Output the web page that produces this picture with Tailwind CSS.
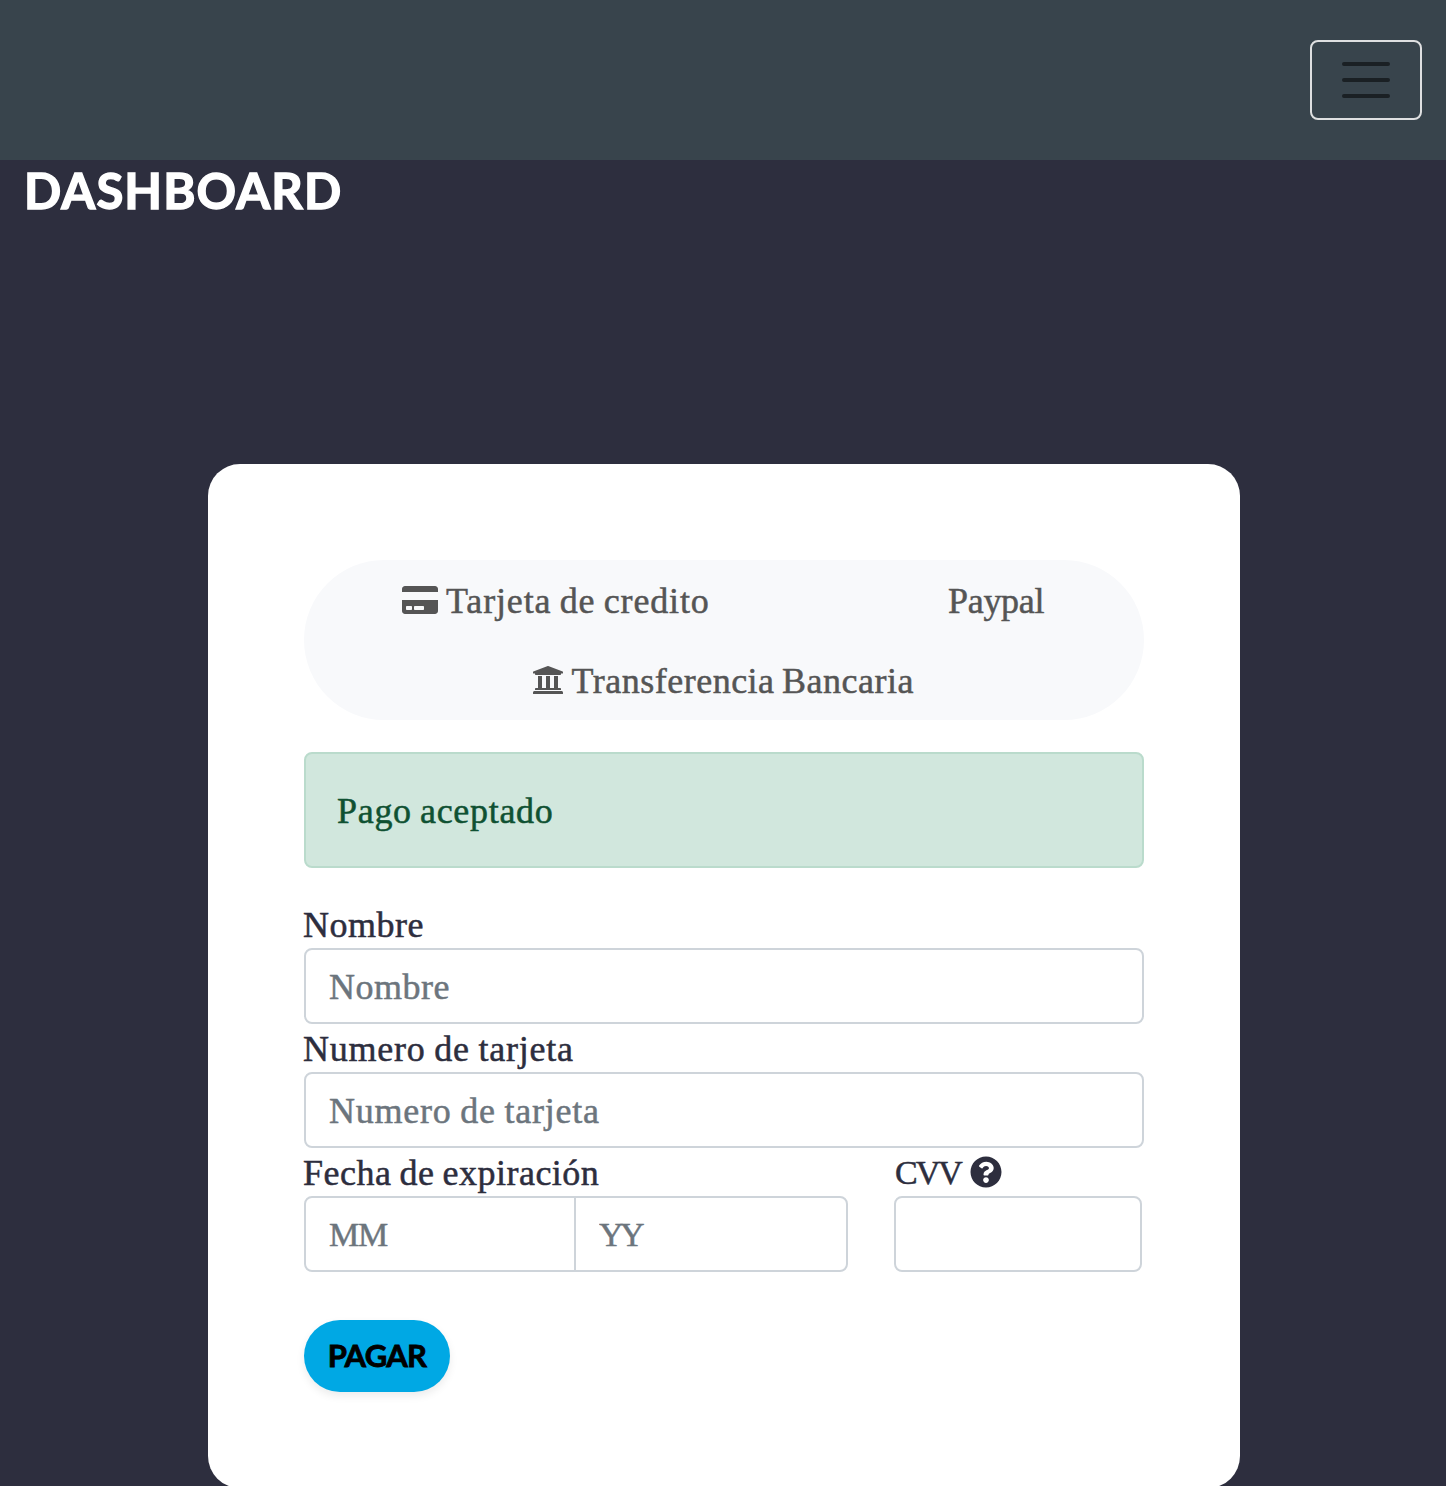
<!DOCTYPE html>
<html lang="es">
<head>
<meta charset="utf-8">
<title>Dashboard</title>
<script src="https://cdn.jsdelivr.net/npm/@tailwindcss/browser@4"></script>
</head>
<body class="h-[1486px] overflow-hidden bg-[#2d2e3e] font-['Liberation_Serif',serif] text-[36px] leading-[48px] text-[#2d2e3e] [-webkit-text-stroke-width:0.5px]">
<nav class="flex h-40 items-center justify-end bg-[#38444c] px-6">
  <button class="flex h-20 w-28 items-center justify-center rounded-lg border-2 border-[#dfe0e1]" aria-label="Menu">
    <svg class="size-12" viewBox="0 0 48 48" fill="none" stroke="#1a2024" stroke-width="4" stroke-linecap="round"><path d="M2 8h44M2 24h44M2 40h44"/></svg>
  </button>
</nav>
<h1 class="h-[304px] pl-6 font-['Lato',sans-serif] text-[49px] leading-[60px] font-bold tracking-[1.1px] text-white [-webkit-text-stroke-width:1.4px]">DASHBOARD</h1>
<main class="ml-[208px] h-[1024px] w-[1032px] rounded-[32px] bg-white p-24">
  <div class="grid h-40 grid-cols-[504px_336px] grid-rows-2 rounded-[80px] bg-[#f8f9fb] text-[#555]">
    <a class="flex items-center justify-center gap-2 whitespace-nowrap">
      <svg class="h-8 w-9 shrink-0" viewBox="0 0 576 512" fill="currentColor" stroke="none"><path d="M0 432c0 26.5 21.5 48 48 48h480c26.5 0 48-21.5 48-48V256H0v176zm192-68c0-6.6 5.4-12 12-12h136c6.6 0 12 5.4 12 12v40c0 6.6-5.4 12-12 12H204c-6.6 0-12-5.4-12-12v-40zm-128 0c0-6.6 5.4-12 12-12h72c6.6 0 12 5.4 12 12v40c0 6.6-5.4 12-12 12H76c-6.6 0-12-5.4-12-12v-40zM576 80v48H0V80c0-26.5 21.5-48 48-48h480c26.5 0 48 21.5 48 48z"/></svg>
      <span class="w-[264px] pt-px tracking-[0.85px] [word-spacing:-1.5px]">Tarjeta de credito</span>
    </a>
    <a class="flex items-center justify-center whitespace-nowrap pl-10"><span class="w-24 pt-px tracking-[-0.3px]">Paypal</span></a>
    <a class="col-span-2 flex items-center justify-center gap-2 whitespace-nowrap">
      <svg class="size-8 shrink-0" viewBox="0 0 512 512" fill="currentColor"><path d="M496 128v16a8 8 0 0 1-8 8h-24v12c0 6.627-5.373 12-12 12H60c-6.627 0-12-5.373-12-12v-12H24a8 8 0 0 1-8-8v-16a8 8 0 0 1 4.941-7.392l232-88a7.996 7.996 0 0 1 6.118 0l232 88A8 8 0 0 1 496 128zm-24 304H40c-13.255 0-24 10.745-24 24v16a8 8 0 0 0 8 8h464a8 8 0 0 0 8-8v-16c0-13.255-10.745-24-24-24zM96 192v192H60c-6.627 0-12 5.373-12 12v20h416v-20c0-6.627-5.373-12-12-12h-36V192h-64v192h-64V192h-64v192h-64V192H96z"/></svg>
      <span class="w-[345px] pt-px tracking-[0.5px] [word-spacing:-2px]">Transferencia Bancaria</span>
    </a>
  </div>
  <p class="mt-8 rounded-lg border-2 border-[#badbcc] bg-[#d1e7dd] px-[31px] pt-[33px] pb-[31px] tracking-[0.7px] [word-spacing:-1.5px] text-[#0f5132]">Pago aceptado</p>
  <form class="mt-8">
    <label class="-ml-px block h-12 pt-px tracking-[0.5px]">Nombre</label>
    <input class="block h-[76px] w-full rounded-lg border-2 border-[#ced4da] px-[23px] pt-0.5 tracking-[0.5px] placeholder:text-[#6c757d]" placeholder="Nombre">
    <label class="-ml-px block h-12 pt-px tracking-[0.75px] [word-spacing:-1px]">Numero de tarjeta</label>
    <input class="block h-[76px] w-full rounded-lg border-2 border-[#ced4da] px-[23px] pt-0.5 tracking-[0.75px] [word-spacing:-1px] placeholder:text-[#6c757d]" placeholder="Numero de tarjeta">
    <div class="flex gap-[46px]">
      <div class="w-[544px]">
        <label class="-ml-px block h-12 pt-px tracking-[0.5px] [word-spacing:-1.5px]">Fecha de expiración</label>
        <div class="flex">
          <input class="h-[76px] w-[272px] rounded-l-lg border-2 border-[#ced4da] px-[23px] pt-0.5 text-[34px] tracking-[-1.2px] placeholder:text-[#6c757d]" placeholder="MM">
          <input class="-ml-0.5 h-[76px] w-[274px] rounded-r-lg border-2 border-[#ced4da] px-[23px] pt-0.5 text-[34px] tracking-[-3.5px] placeholder:text-[#6c757d]" placeholder="YY">
        </div>
      </div>
      <div class="w-[248px]">
        <label class="flex h-12 items-center"><span class="w-[75.5px] pl-px pt-0.5 text-[34px] tracking-[-2px]">CVV</span>
          <svg class="size-8" viewBox="0 0 512 512" fill="currentColor"><path d="M504 256c0 136.997-111.043 248-248 248S8 392.997 8 256C8 119.083 119.043 8 256 8s248 111.083 248 248zM262.655 90c-54.497 0-89.255 22.957-116.549 63.758-3.536 5.286-2.353 12.415 2.715 16.258l34.699 26.31c5.205 3.947 12.621 3.008 16.665-2.122 17.864-22.658 30.113-35.797 57.303-35.797 20.429 0 45.698 13.148 45.698 32.958 0 14.976-12.363 22.667-32.534 33.976C247.128 238.528 216 254.941 216 296v4c0 6.627 5.373 12 12 12h56c6.627 0 12-5.373 12-12v-1.333c0-28.462 83.186-29.647 83.186-106.667 0-58.002-60.165-102-116.531-102zM256 338c-25.365 0-46 20.635-46 46 0 25.364 20.635 46 46 46s46-20.636 46-46c0-25.364-20.635-46-46-46z"/></svg>
        </label>
        <input class="block h-[76px] w-full rounded-lg border-2 border-[#ced4da] px-6" aria-label="CVV">
      </div>
    </div>
    <button type="button" class="mt-12 flex h-[72px] w-[146px] items-center justify-center rounded-full bg-[#00a8e4] pb-0.5 font-['Lato',sans-serif] text-[31px] leading-[48px] font-bold tracking-[-0.7px] text-black shadow-[0_4px_8px_rgba(0,0,0,0.08)] [-webkit-text-stroke-width:0.8px]">PAGAR</button>
  </form>
</main>
</body>
</html>
